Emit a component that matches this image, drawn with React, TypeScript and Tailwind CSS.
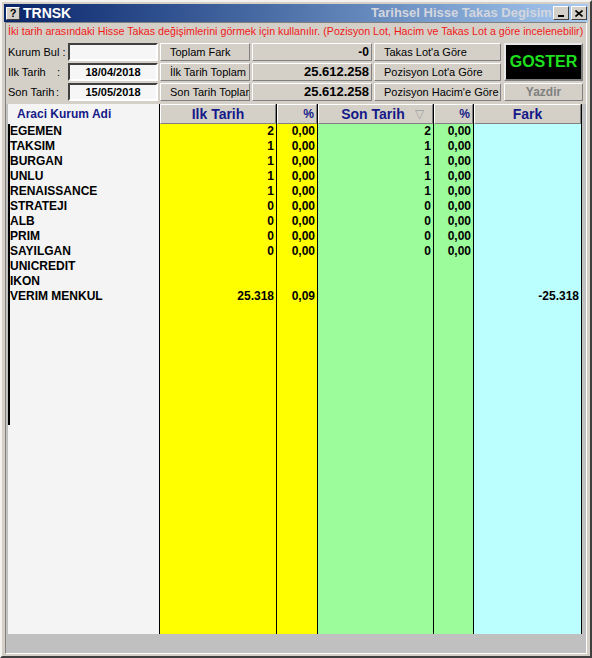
import React from "react";

type Row = [string, string, string, string, string, string];

const ROWS: Row[] = [
  ["EGEMEN", "2", "0,00", "2", "0,00", ""],
  ["TAKSIM", "1", "0,00", "1", "0,00", ""],
  ["BURGAN", "1", "0,00", "1", "0,00", ""],
  ["UNLU", "1", "0,00", "1", "0,00", ""],
  ["RENAISSANCE", "1", "0,00", "1", "0,00", ""],
  ["STRATEJI", "0", "0,00", "0", "0,00", ""],
  ["ALB", "0", "0,00", "0", "0,00", ""],
  ["PRIM", "0", "0,00", "0", "0,00", ""],
  ["SAYILGAN", "0", "0,00", "0", "0,00", ""],
  ["UNICREDIT", "", "", "", "", ""],
  ["IKON", "", "", "", "", ""],
  ["VERIM MENKUL", "25.318", "0,09", "", "", "-25.318"],
];

const raised =
  "border border-t-white border-l-white border-r-[#808080] border-b-[#808080] bg-[#d4d0c8]";

function Btn({ children }: { children: React.ReactNode }) {
  return (
    <div
      className={`${raised} flex items-center overflow-hidden whitespace-nowrap pl-[9px] text-[11px] text-black`}
    >
      {children}
    </div>
  );
}

function Field({ value }: { value: string }) {
  return (
    <div className="flex items-center justify-center border-2 border-t-[#404040] border-l-[#404040] border-r-white border-b-white bg-[#f6f6f6] text-[11px] font-bold text-black">
      {value}
    </div>
  );
}

function Total({ value, size }: { value: string; size: string }) {
  return (
    <div
      className={`${raised} flex items-center justify-end pr-[2px] font-bold text-black ${size}`}
    >
      {value}
    </div>
  );
}

function Column({
  width,
  bg,
  header,
  idx,
}: {
  width: string;
  bg: string;
  header: React.ReactNode;
  idx: number;
}) {
  return (
    <div className={`flex flex-col border-r border-black ${width}`}>
      <div
        className={`${raised} flex h-[20px] items-center justify-center text-[14px] font-bold text-[#141a88]`}
      >
        {header}
      </div>
      <div className={`flex-1 ${bg}`}>
        {ROWS.map((r, i) => (
          <div
            key={i}
            className="h-[15px] whitespace-nowrap pr-[2px] text-right text-[12px] font-bold leading-[15px] text-black"
          >
            {r[idx]}
          </div>
        ))}
      </div>
    </div>
  );
}

export default function App() {
  return (
    <div className="h-[658px] w-[592px] border-2 border-t-[#f4f2ee] border-l-[#f4f2ee] border-r-[#404040] border-b-[#404040] bg-[#d4d0c8] p-[2px] font-['Liberation_Sans',Arial,sans-serif]">
      <div className="flex h-full flex-col">
        {/* title bar */}
        <div className="flex h-[18px] items-center bg-gradient-to-r from-[#0a246a] to-[#a6caf0] pl-[2px] pr-[1px]">
          <div className="flex h-[13px] w-[14px] items-center justify-center border border-t-white border-l-white border-r-[#404040] border-b-[#404040] bg-[#d4d0c8] text-[11px] font-bold leading-none text-black">
            ?
          </div>
          <span className="ml-[3px] text-[14px] font-bold text-white">TRNSK</span>
          <div className="ml-auto w-[182px] overflow-hidden whitespace-nowrap text-[13px] font-bold text-[#d4d6de]">
            Tarihsel Hisse Takas Degisim
          </div>
          <div className="flex h-[14px] w-[16px] items-end justify-center border border-t-white border-l-white border-r-[#404040] border-b-[#404040] bg-[#d4d0c8] pb-[2px]">
            <div className="h-[2px] w-[6px] bg-black" />
          </div>
          <div className="ml-[2px] flex h-[14px] w-[16px] items-center justify-center border border-t-white border-l-white border-r-[#404040] border-b-[#404040] bg-[#d4d0c8]">
            <svg width="8" height="7" viewBox="0 0 8 7">
              <path d="M0.5 0.5 L7.5 6.5 M7.5 0.5 L0.5 6.5" stroke="black" strokeWidth="1.6" />
            </svg>
          </div>
        </div>

        {/* content panel */}
        <div className="mx-[1px] flex flex-1 flex-col border border-t-[#808080] border-l-[#808080] border-r-white border-b-white">
          <div className="h-[16px] whitespace-nowrap pl-[2px] text-[10.7px] leading-[16px] text-[#f01818]">
            İki tarih arasındaki Hisse Takas değişimlerini görmek için kullanılır. (Pozisyon Lot, Hacim ve Takas Lot a göre incelenebilir)
          </div>

          <div className="mt-[4px] grid grid-cols-[58px_90px_90px_120px_127px_80px] grid-rows-[18px_18px_18px] gap-x-[2px] gap-y-[2px] pl-[2px]">
            <div className="flex items-center text-[11px] text-black">Kurum Bul :</div>
            <Field value="" />
            <Btn>Toplam Fark</Btn>
            <Total value="-0" size="text-[12px]" />
            <Btn>Takas Lot'a Göre</Btn>
            <div className="row-span-2 ml-[1px] flex items-center justify-center border-2 border-t-[#e8e8e8] border-l-[#e8e8e8] border-r-[#808080] border-b-[#808080] bg-black text-[16px] font-bold text-[#1ee01e]">
              GOSTER
            </div>

            <div className="flex items-center text-[11px] text-black">
              <span>Ilk Tarih</span>
              <span className="ml-auto mr-[6px]">:</span>
            </div>
            <Field value="18/04/2018" />
            <Btn>İlk Tarih Toplam</Btn>
            <Total value="25.612.258" size="text-[13px]" />
            <Btn>Pozisyon Lot'a Göre</Btn>

            <div className="flex items-center text-[11px] text-black">
              <span>Son Tarih</span>
              <span className="ml-auto mr-[7px]">:</span>
            </div>
            <Field value="15/05/2018" />
            <Btn>Son Tarih Toplam</Btn>
            <Total value="25.612.258" size="text-[13px]" />
            <Btn>Pozisyon Hacim'e Göre</Btn>
            <div
              className={`${raised} ml-[1px] flex items-center justify-center text-[12px] font-bold text-[#808080]`}
            >
              Yazdir
            </div>
          </div>

          {/* grid */}
          <div className="mt-[3px] flex flex-1 flex-col bg-[#c0c0c0] pl-[2px]">
            <div className="flex h-[530px] shrink-0">
              <div className="flex w-[152px] flex-col border-r border-black bg-[#f4f4f4]">
                <div className="flex h-[20px] items-center pl-[9px] text-[12px] font-bold text-[#141a88]">
                  Araci Kurum Adi
                </div>
                <div className="h-[301px] border-l-2 border-black">
                  {ROWS.map((r) => (
                    <div
                      key={r[0]}
                      className="h-[15px] whitespace-nowrap text-[12px] font-bold leading-[15px] text-black"
                    >
                      {r[0]}
                    </div>
                  ))}
                </div>
              </div>
              <Column width="w-[117px]" bg="bg-[#ffff00]" header="Ilk Tarih" idx={1} />
              <Column
                width="w-[41px]"
                bg="bg-[#ffff00]"
                header={<span className="ml-auto pr-[2px] text-[12px]">%</span>}
                idx={2}
              />
              <Column
                width="w-[116px]"
                bg="bg-[#9cfc9c]"
                header={
                  <span className="flex w-full items-center justify-center pl-[14px]">
                    Son Tarih
                    <span className="ml-[10px] text-[12px] font-normal text-[#a0a0a0]">▽</span>
                  </span>
                }
                idx={3}
              />
              <Column
                width="w-[40px]"
                bg="bg-[#9cfc9c]"
                header={<span className="ml-auto pr-[2px] text-[12px]">%</span>}
                idx={4}
              />
              <Column width="w-[108px]" bg="bg-[#bcffff]" header="Fark" idx={5} />
            </div>
          </div>
        </div>
      </div>
    </div>
  );
}
